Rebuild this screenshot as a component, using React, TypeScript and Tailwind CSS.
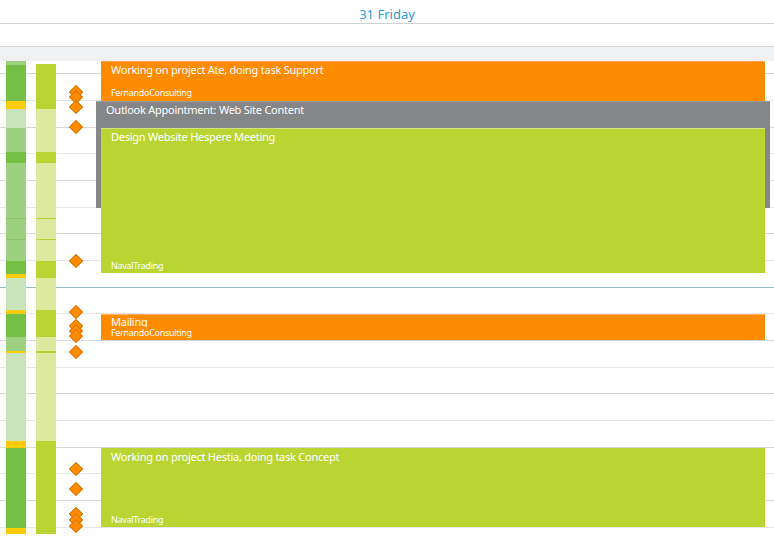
import React from 'react'

const ROWS = [27, 27, 27, 26, 27, 27, 26, 27, 27, 26, 27, 27, 26, 27, 27, 26, 27, 27, 20]
const LINE = ['hour', 'half', 'hour', 'half', 'hour', 'half', 'hour', 'half', 'now', 'half', 'hour', 'half', 'hour', 'half', 'hour', 'half', 'hour', 'half', 'none']

const G = '#74bf45'
const GL = '#9dd17f'
const GP = '#c9e4ba'
const Y = '#ffcb05'
const LG = '#bad532'
const LP = '#dde99e'

const BAR1: [number, string][] = [
  [4, GL], [36, G], [8, Y], [19, GP], [24, GL], [11, G], [55, GL], [1, '#86c865'], [20, GL], [1, '#86c865'],
  [21, GL], [13, G], [4, Y], [32, GP], [4, Y], [23, G], [14, GL], [2, Y], [88, GP], [7, Y], [80, G], [6, Y],
]
const BAR2: [number, string][] = [
  [45, LG], [43, LP], [11, LG], [55, LP], [1, LG], [20, LP], [1, LG], [21, LP], [17, LG], [32, LP],
  [27, LG], [14, LP], [2, LG], [88, LP], [93, LG],
]

const DIAMONDS = [92, 97, 107, 127, 261, 312, 326, 331, 336, 352, 469, 489, 514, 520, 526]

const lineClass: Record<string, string> = {
  hour: 'border-b border-[#d6d6d6]',
  half: 'border-b border-[#e6e6e6]',
  now: 'border-b border-[#98bccb]',
  none: '',
}

function Bar({ segs, top, left }: { segs: [number, string][]; top: number; left: number }) {
  return (
    <div className="absolute w-[20px] flex flex-col" style={{ top, left }}>
      {segs.map(([h, c], i) => (
        <div key={i} style={{ height: h, background: c }} />
      ))}
    </div>
  )
}

// titles in the event boxes
const title = 'text-[11px] leading-[16px] tracking-[-0.25px]'
const sub = 'text-[9px] leading-[11px] tracking-[-0.3px]'

export default function App() {
  const font = { fontFamily: '"Segoe UI", "Noto Sans", "Open Sans", sans-serif' }
  return (
    <div className="w-[774px] h-[540px] overflow-hidden bg-white" style={font}>
      <div className="h-[24px] border-b border-[#d2d2d2] flex items-center justify-center pt-[6px] text-[13px] text-[#2b9ad6] leading-none">
        31 Friday
      </div>
      <div className="h-[23px] border-b border-[#d2d2d2]" />

      <div className="relative">
        <div className="flex flex-col">
          {ROWS.map((h, i) => (
            <div key={i} className={`${lineClass[LINE[i]]} flex flex-col`} style={{ height: h }}>
              {i === 0 && <div className="h-[14px] bg-[#f0f1f3]" />}
            </div>
          ))}
        </div>

        <Bar segs={BAR1} top={14} left={6} />
        <Bar segs={BAR2} top={17} left={36} />

        {DIAMONDS.map((y, i) => (
          <div
            key={i}
            className="absolute w-[10px] h-[10px] rotate-45 bg-[#ff8c00] border border-[#d87400]"
            style={{ top: y - 47 - 5, left: 71 }}
          />
        ))}

        {/* events */}
        <div className="absolute left-[101px] top-[14px] w-[664px] h-[40px] bg-[#ff8c00] border-t border-[#ffa640] flex flex-col justify-between px-[10px] pb-[3px] text-white">
          <div className={title}>Working on project Ate, doing task Support</div>
          <div className={sub}>FernandoConsulting</div>
        </div>

        <div className="absolute left-[96px] top-[54px] w-[674px] h-[107px] bg-[#858687] border-t border-[#9a9a9a] px-[10px] text-white">
          <div className={title}>Outlook Appointment: Web Site Content</div>
        </div>

        <div className="absolute left-[101px] top-[81px] w-[664px] h-[145px] bg-[#bad532] border-t border-[#d2e47e] flex flex-col justify-between px-[10px] pb-[2px] text-white">
          <div className={title}>Design Website Hespere Meeting</div>
          <div className={sub}>NavalTrading</div>
        </div>

        <div className="absolute left-[101px] top-[267px] w-[664px] h-[26px] bg-[#ff8c00] border-t border-[#ffb060] flex flex-col px-[10px] pt-[1px] text-white">
          <div className="text-[11px] leading-[12px] tracking-[-0.25px] h-[11px] overflow-hidden">Mailing</div>
          <div className={sub}>FernandoConsulting</div>
        </div>

        <div className="absolute left-[101px] top-[401px] w-[664px] h-[79px] bg-[#bad532] flex flex-col justify-between px-[10px] pt-[1px] pb-[2px] text-white">
          <div className={title}>Working on project Hestia, doing task Concept</div>
          <div className={sub}>NavalTrading</div>
        </div>
      </div>
    </div>
  )
}
